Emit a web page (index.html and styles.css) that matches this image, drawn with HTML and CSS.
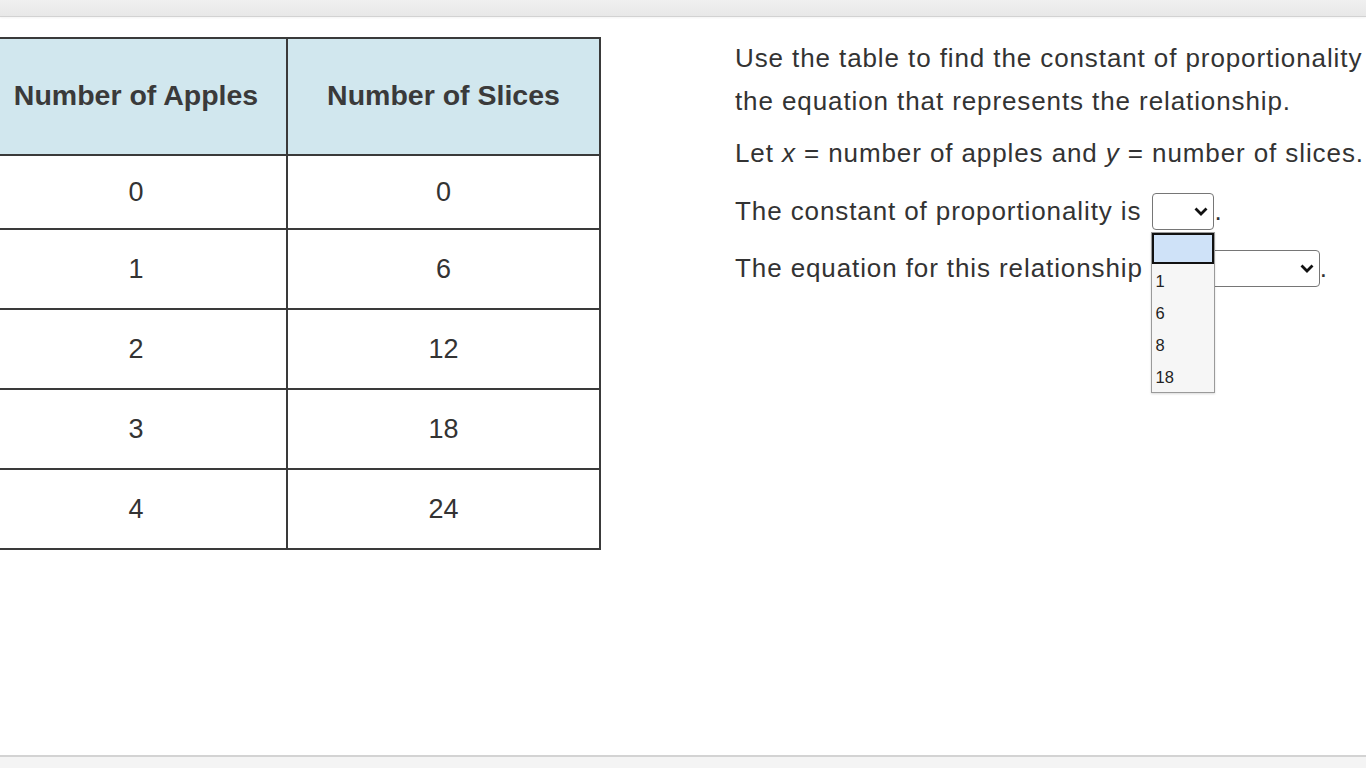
FILE: index.html
```html
<!DOCTYPE html>
<html lang="en">
<head>
<meta charset="utf-8">
<title>Constant of proportionality</title>
<link rel="stylesheet" href="styles.css">
</head>
<body>
<div class="topbar"></div>
<main class="main">
  <div class="table-wrap">
    <table class="data">
      <thead>
        <tr class="head-row"><th class="col1">Number of Apples</th><th class="col2">Number of Slices</th></tr>
      </thead>
      <tbody>
        <tr class="row-first"><td>0</td><td>0</td></tr>
        <tr class="row"><td>1</td><td>6</td></tr>
        <tr class="row"><td>2</td><td>12</td></tr>
        <tr class="row"><td>3</td><td>18</td></tr>
        <tr class="row"><td>4</td><td>24</td></tr>
      </tbody>
    </table>
  </div>
  <div class="content">
    <p class="intro">Use the table to find the constant of proportionality and the equation that represents the relationship.</p>
    <p class="vars">Let <i>x</i> = number of apples and <i>y</i> = number of slices.</p>
    <p class="q q1">The constant of proportionality is <span class="select small"><svg class="chev" width="14" height="9" viewBox="0 0 14 9"><path d="M1.5 1.5 L7 7 L12.5 1.5" fill="none" stroke="#111" stroke-width="2.8" stroke-linejoin="miter"/></svg><span class="listbox"><span class="opt opt-sel"></span><span class="opt">1</span><span class="opt">6</span><span class="opt">8</span><span class="opt">18</span></span></span>.</p>
    <p class="q q2">The equation for this relationship is <span class="select wide"><svg class="chev" width="14" height="9" viewBox="0 0 14 9"><path d="M1.5 1.5 L7 7 L12.5 1.5" fill="none" stroke="#111" stroke-width="2.8" stroke-linejoin="miter"/></svg></span>.</p>
  </div>
</main>
<div class="footer"></div>
</body>
</html>
```
FILE: styles.css
```css
html, body {
  margin: 0;
  padding: 0;
}
body {
  width: 1366px;
  height: 768px;
  overflow: hidden;
  display: flex;
  flex-direction: column;
  background: #fff;
  font-family: "Liberation Sans", Arial, sans-serif;
  color: #333;
}
.topbar {
  height: 16px;
  flex: none;
  background: linear-gradient(#f0f0f0, #e8e8e8);
  border-bottom: 1px solid #d2d2d2;
  box-shadow: 0 1px 2px rgba(0,0,0,0.05);
}
.main {
  flex: 1;
  display: flex;
  align-items: flex-start;
  padding-top: 20px;
  min-height: 0;
}
.table-wrap {
  flex: none;
  margin-left: -16px;
}
.data {
  border-collapse: collapse;
  width: 611px;
  table-layout: fixed;
}
.data th, .data td {
  border: 2px solid #3a3a3a;
  text-align: center;
  padding: 0;
}
.data th {
  background: #d1e7ee;
  font-weight: bold;
  font-size: 28.5px;
  letter-spacing: 0;
  color: #3a3a3a;
  padding-bottom: 2px;
}
.data td {
  font-size: 27px;
  color: #333;
}
.col1 { width: 300px; }
.col2 { width: 311px; }
.head-row { height: 117px; }
.row-first { height: 74px; }
.row { height: 80px; }

.content {
  flex: none;
  width: 720px;
  margin-left: 134px;
  font-size: 26px;
  letter-spacing: 0.9px;
}
.content p {
  margin: 0;
  line-height: 43px;
}
.content .vars { margin-top: 9px; }
.content .q { margin-top: 15px; }
.content .q2 { margin-top: 14px; }
.content i { font-style: italic; }

.select {
  position: relative;
  display: inline-flex;
  align-items: center;
  justify-content: flex-end;
  box-sizing: border-box;
  height: 37px;
  vertical-align: middle;
  border: 1px solid #767676;
  border-radius: 4px;
  background: #fff;
  padding-right: 5px;
  letter-spacing: 0;
  margin-top: -4px;
}
.select.small { width: 62px; margin-left: 3px; }
.select.wide { width: 137px; margin-left: 3px; }
.chev { display: block; }

.listbox {
  position: absolute;
  z-index: 5;
  top: 38px;
  left: -2px;
  width: 64px;
  box-sizing: border-box;
  border: 1px solid #9a9a9a;
  background: #f6f6f6;
  display: flex;
  flex-direction: column;
  box-shadow: 0 1px 2px rgba(0,0,0,0.15);
}
.opt {
  display: block;
  height: 32px;
  line-height: 34px;
  font-size: 16.5px;
  padding-left: 3px;
  color: #222;
}
.opt-sel {
  height: 31px;
  box-sizing: border-box;
  border: 2px solid #111;
  background: #cfe2f8;
}
.footer {
  flex: none;
  height: 11px;
  border-top: 2px solid #d3d3d3;
  background: #f4f4f4;
}
```
